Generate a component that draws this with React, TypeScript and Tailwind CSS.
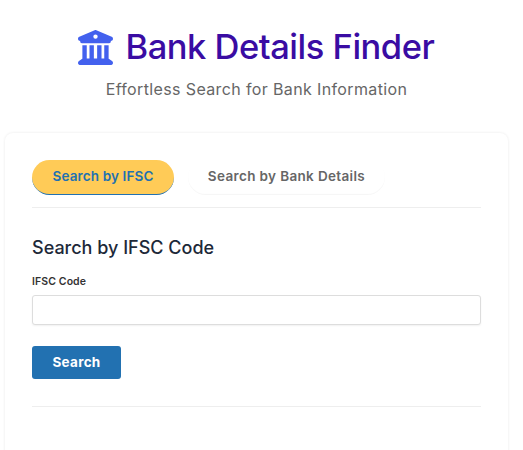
import { clsx } from "clsx";
import { useState } from "react";
import { FaBuildingColumns } from "react-icons/fa6";

const TABS = [
  {
    id: "ifsc",
    label: "Search by IFSC",
    className: "w-[142px] tracking-[0.01em]",
  },
  {
    id: "bank",
    label: "Search by Bank Details",
    className: "w-[197px] tracking-[0.026em]",
  },
];

function Header() {
  return (
    <header className="flex h-[133px] w-[513px] flex-col items-center">
      <h1 className="mt-[24px] flex h-[46px] items-center text-[34.5px] leading-[46px] font-medium text-[#3a0ca3]">
        <FaBuildingColumns className="mt-[1px] mr-[13px] h-[35px] w-[35px] text-[#4361ee]" />
        <span className="w-[310px] tracking-[-0.014em] whitespace-nowrap">
          Bank Details Finder
        </span>
      </h1>
      <p className="mt-[7px] text-[16px] leading-[24px] tracking-[0.37px] whitespace-nowrap text-[#666]">
        Effortless Search for Bank Information
      </p>
    </header>
  );
}

function Tabs({
  active,
  onChange,
}: {
  active: string;
  onChange: (id: string) => void;
}) {
  return (
    <div className="flex gap-[14px] border-b border-[#eee] pb-[12px]">
      {TABS.map(({ id, label, className }) => (
        <button
          key={id}
          onClick={() => onChange(id)}
          className={clsx(
            "h-[35px] rounded-full text-[13.5px] leading-[20px] font-semibold whitespace-nowrap",
            className,
            active === id
              ? "border-b border-[#2271b1] bg-[#ffcb57] pb-[2px] text-[#2271b1]"
              : "bg-white pb-[3px] text-[#666] shadow-[inset_0_-1px_1px_rgba(0,0,0,0.04)]",
          )}
        >
          {label}
        </button>
      ))}
    </div>
  );
}

export default function App() {
  const [tab, setTab] = useState("ifsc");
  const [code, setCode] = useState("");

  return (
    <div className="h-[450px] overflow-hidden bg-white font-['Inter',sans-serif]">
      <Header />
      <main className="ml-[5px] h-[400px] w-[503px] rounded-lg bg-white px-[27px] pt-[27px] shadow-[0_0_3px_rgba(0,0,0,0.09)]">
        <Tabs active={tab} onChange={setTab} />
        <form
          className="border-b border-[#eee] pb-[27px]"
          onSubmit={(e) => e.preventDefault()}
        >
          <h2 className="mt-[28px] text-[18px] leading-[24px] font-medium whitespace-nowrap text-[#1d2939]">
            Search by IFSC Code
          </h2>
          <label
            htmlFor="code"
            className="mt-[14px] block text-[10.5px] leading-[16px] font-semibold tracking-[0.1px] text-[#333]"
          >
            IFSC Code
          </label>
          <input
            id="code"
            value={code}
            onChange={(e) => setCode(e.target.value)}
            className="mt-[5px] block h-[30px] w-full rounded-[3px] border border-[#ddd] bg-white px-2 text-sm shadow-[0_1px_2px_rgba(0,0,0,0.06)] outline-none"
          />
          <button className="mt-[21px] block h-[33px] w-[89px] rounded-[3px] bg-[#2271b1] text-[13.5px] font-bold tracking-[0.3px] text-white">
            Search
          </button>
        </form>
      </main>
    </div>
  );
}
